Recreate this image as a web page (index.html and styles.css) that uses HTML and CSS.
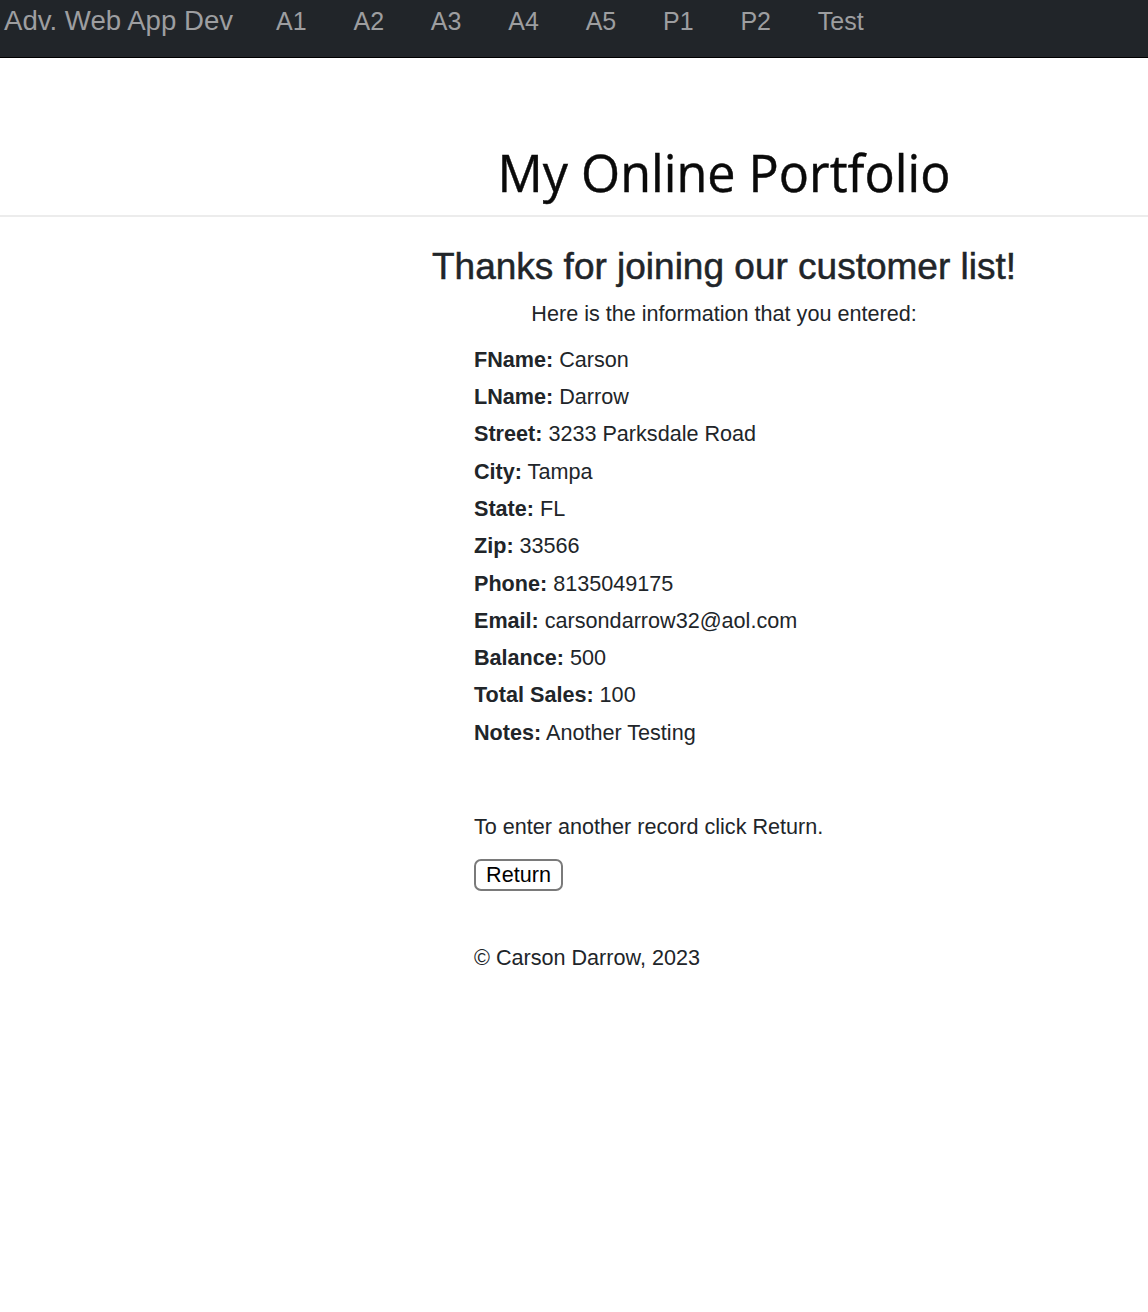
FILE: index.html
```html
<!DOCTYPE html>
<html lang="en">
<head>
<meta charset="utf-8">
<title>My Online Portfolio</title>
<link rel="stylesheet" href="styles.css">
</head>
<body>
<nav class="navbar">
  <a class="brand" href="#">Adv. Web App Dev</a>
  <ul class="nav-links">
    <li><a href="#">A1</a></li>
    <li><a href="#">A2</a></li>
    <li><a href="#">A3</a></li>
    <li><a href="#">A4</a></li>
    <li><a href="#">A5</a></li>
    <li><a href="#">P1</a></li>
    <li><a href="#">P2</a></li>
    <li><a href="#">Test</a></li>
  </ul>
</nav>
<header class="page-header">
  <h1 class="title">My Online Portfolio</h1>
</header>
<hr class="divider">
<main class="content">
  <h3 class="thanks">Thanks for joining our customer list!</h3>
  <p class="intro">Here is the information that you entered:</p>
  <div class="details">
    <div class="row"><b>FName:</b> Carson</div>
    <div class="row"><b>LName:</b> Darrow</div>
    <div class="row"><b>Street:</b> 3233 Parksdale Road</div>
    <div class="row"><b>City:</b> Tampa</div>
    <div class="row"><b>State:</b> FL</div>
    <div class="row"><b>Zip:</b> 33566</div>
    <div class="row"><b>Phone:</b> 8135049175</div>
    <div class="row"><b>Email:</b> carsondarrow32@aol.com</div>
    <div class="row"><b>Balance:</b> 500</div>
    <div class="row"><b>Total Sales:</b> 100</div>
    <div class="row"><b>Notes:</b> Another Testing</div>
    <p class="again">To enter another record click Return.</p>
    <button class="return-btn" type="button">Return</button>
    <p class="copyright">© Carson Darrow, 2023</p>
  </div>
</main>
</body>
</html>
```

FILE: styles.css
```css
html, body {
  margin: 0;
  padding: 0;
  background: #fff;
}

body {
  font-family: "Liberation Sans", Arial, Helvetica, sans-serif;
  font-size: 21.6px;
  line-height: 1.5;
  color: #212529;
}

.navbar {
  height: 57px;
  background: #212529;
  border-bottom: 1px solid #000;
  display: flex;
  align-items: baseline;
  padding-left: 4px;
  line-height: 41px;
}

.navbar a {
  color: #9d9ea0;
  text-decoration: none;
}

.brand {
  font-size: 27.6px;
}

.nav-links {
  list-style: none;
  margin: 0 0 0 43px;
  padding: 0;
  display: flex;
  gap: 46.8px;
  font-size: 25px;
}

.page-header {
  padding-left: 300px;
  padding-top: 83px;
  padding-bottom: 10px;
}

.title {
  margin: 0;
  text-align: center;
  font-family: "Open Sans", "DejaVu Sans", sans-serif;
  font-weight: 400;
  font-size: 50.3px;
  line-height: 64px;
  color: #0a0a0a;
  -webkit-text-stroke: 0.4px #0a0a0a;
}

.divider {
  margin: 0;
  border: 0;
  border-top: 2px solid #ececec;
}

.content {
  padding-left: 300px;
}

.thanks {
  margin: 28px 0 0;
  text-align: center;
  font-size: 37px;
  font-weight: 500;
  line-height: 44.4px;
  -webkit-text-stroke: 0.5px #212529;
}

.intro {
  margin: 9px 0 0;
  text-align: center;
  line-height: 32.4px;
}

.details {
  margin-left: 174px;
  padding-top: 10px;
}

.row {
  line-height: 37.3px;
}

.row b {
  font-weight: 700;
}

.again {
  margin: 60px 0 0;
  line-height: 32.4px;
}

.return-btn {
  display: block;
  margin-top: 16px;
  height: 32px;
  width: 89px;
  padding: 0;
  font-family: inherit;
  font-size: 21.6px;
  line-height: 28px;
  color: #000;
  background: #fff;
  border: 2px solid #7a7a7a;
  border-radius: 7px;
}

.copyright {
  margin: 51px 0 0;
  line-height: 32.4px;
}
```
